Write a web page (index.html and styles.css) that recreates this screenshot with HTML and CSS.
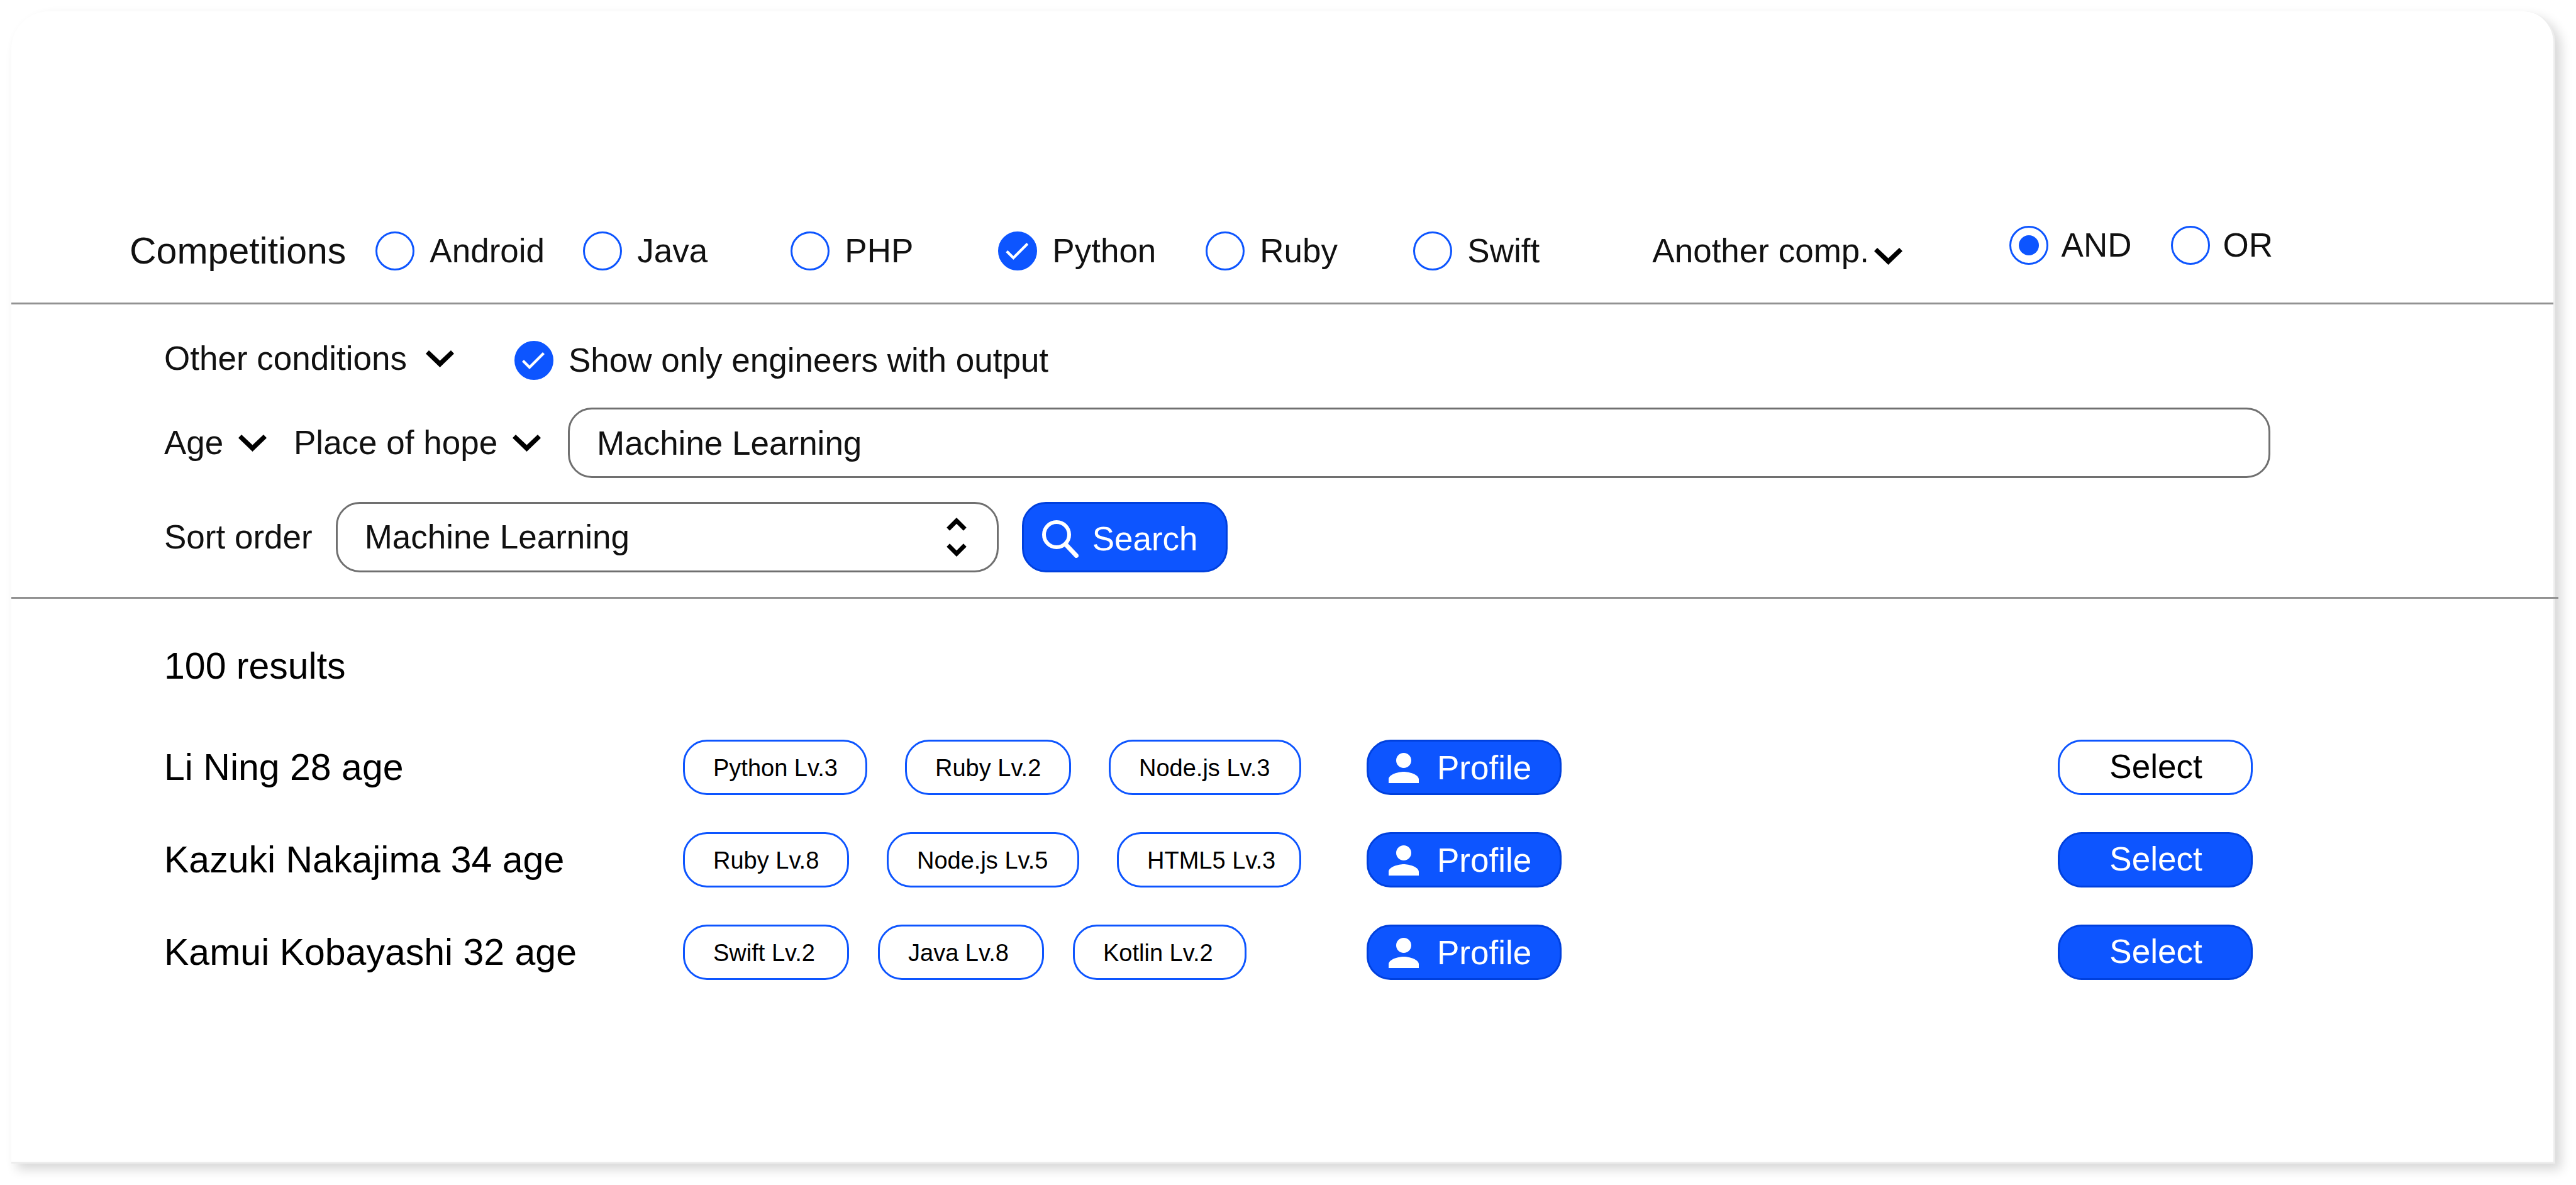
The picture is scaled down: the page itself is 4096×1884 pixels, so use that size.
FILE: index.html
```html
<!DOCTYPE html>
<html lang="en">
<head>
<meta charset="utf-8">
<title>Engineer search</title>
<link rel="stylesheet" href="styles.css">
</head>
<body>
<svg class="sprite" aria-hidden="true">
  <symbol id="chevron" viewBox="0 0 45 27"><path d="M5 0L22.5 16.5L40 0L45 5.2L22.5 27L0 5.2z"/></symbol>
  <symbol id="unfold" viewBox="7.41 3 9.18 18"><path d="M12 5.83L15.17 9l1.41-1.41L12 3 7.41 7.59 8.83 9 12 5.83zm0 12.34L8.83 15l-1.41 1.41L12 21l4.59-4.59L15.17 15 12 18.17z"/></symbol>
  <symbol id="person" viewBox="4 4 16 16"><path d="M12 12c2.21 0 4-1.79 4-4s-1.79-4-4-4-4 1.79-4 4 1.79 4 4 4zm0 2c-2.67 0-8 1.34-8 4v2h16v-2c0-2.66-5.33-4-8-4z"/></symbol>
  <symbol id="magnifier" viewBox="0 0 58 60"><circle cx="23" cy="23" r="20" fill="none" stroke="currentColor" stroke-width="6"/><path d="M38 39L54.5 56.5" fill="none" stroke="currentColor" stroke-width="7" stroke-linecap="round"/></symbol>
</svg>
<main class="card">
  <form>
    <section class="competitions">
      <h2 class="title">Competitions</h2>
      <div class="skills">
        <label class="choice"><input class="mark check" type="checkbox">Android</label>
        <label class="choice"><input class="mark check" type="checkbox">Java</label>
        <label class="choice"><input class="mark check" type="checkbox">PHP</label>
        <label class="choice"><input class="mark check" type="checkbox" checked>Python</label>
        <label class="choice"><input class="mark check" type="checkbox">Ruby</label>
        <label class="choice"><input class="mark check" type="checkbox">Swift</label>
      </div>
      <div class="picker picker-tight">
        <select class="picker-select" aria-label="Another competition"><option>Another comp.</option></select>
        <svg class="chevron" aria-hidden="true"><use href="#chevron"/></svg>
      </div>
      <div class="modes">
        <label class="choice choice-tight"><input class="mark radio" type="radio" name="mode" checked>AND</label>
        <label class="choice choice-tight"><input class="mark radio" type="radio" name="mode">OR</label>
      </div>
    </section>
    <hr class="rule">
    <section class="conditions">
      <div class="row row-top">
        <div class="picker picker-wide">
          <select class="picker-select" aria-label="Other conditions"><option>Other conditions</option></select>
          <svg class="chevron" aria-hidden="true"><use href="#chevron"/></svg>
        </div>
        <label class="choice"><input class="mark check" type="checkbox" checked>Show only engineers with output</label>
      </div>
      <div class="row">
        <div class="picker">
          <select class="picker-select" aria-label="Age"><option>Age</option></select>
          <svg class="chevron" aria-hidden="true"><use href="#chevron"/></svg>
        </div>
        <div class="picker">
          <select class="picker-select" aria-label="Place of hope"><option>Place of hope</option></select>
          <svg class="chevron" aria-hidden="true"><use href="#chevron"/></svg>
        </div>
        <input class="field keyword" type="text" aria-label="Keyword" value="Machine Learning">
      </div>
      <div class="row row-sort">
        <label for="sort">Sort order</label>
        <div class="sort">
          <select class="field sort-select" id="sort"><option>Machine Learning</option></select>
          <svg class="unfold" aria-hidden="true"><use href="#unfold"/></svg>
        </div>
        <button class="search" type="submit"><svg class="magnifier" aria-hidden="true"><use href="#magnifier"/></svg>Search</button>
      </div>
    </section>
  </form>
  <hr class="rule rule-long">
  <section class="results">
    <p class="count">100 results</p>
    <ul class="people">
      <li class="person">
        <span class="name">Li Ning 28 age</span>
        <div class="tags">
          <span class="tag tag-l">Python Lv.3</span><span class="tag">Ruby Lv.2</span><span class="tag tag-xl">Node.js Lv.3</span>
        </div>
        <button class="pill" type="button"><svg class="avatar" aria-hidden="true"><use href="#person"/></svg>Profile</button>
        <button class="pill pill-select pill-outline" type="button">Select</button>
      </li>
      <li class="person">
        <span class="name">Kazuki Nakajima 34 age</span>
        <div class="tags">
          <span class="tag">Ruby Lv.8</span><span class="tag tag-xl">Node.js Lv.5</span><span class="tag tag-l">HTML5 Lv.3</span>
        </div>
        <button class="pill" type="button"><svg class="avatar" aria-hidden="true"><use href="#person"/></svg>Profile</button>
        <button class="pill pill-select" type="button">Select</button>
      </li>
      <li class="person">
        <span class="name">Kamui Kobayashi 32 age</span>
        <div class="tags tags-close">
          <span class="tag">Swift Lv.2</span><span class="tag">Java Lv.8</span><span class="tag tag-m">Kotlin Lv.2</span>
        </div>
        <button class="pill" type="button"><svg class="avatar" aria-hidden="true"><use href="#person"/></svg>Profile</button>
        <button class="pill pill-select" type="button">Select</button>
      </li>
    </ul>
  </section>
</main>
</body>
</html>
```
FILE: styles.css
```css
* {
  box-sizing: border-box;
}

:root {
  --blue: #0d55ff;
  --blue-dark: #0040dd;
  --ink: #111;
}

body {
  margin: 0;
  padding: 18px 33px 33px 18px;
  background: #fff;
  color: var(--ink);
  font: 53px/62px "Liberation Sans", Arial, sans-serif;
  font-variant-ligatures: none;
}

button,
input,
select {
  margin: 0;
  color: inherit;
  font: inherit;
  font-variant-ligatures: none;
}

.sprite {
  position: absolute;
  width: 0;
  height: 0;
}

.card {
  padding-bottom: 289px;
  background: #fff;
  border-right: 3px solid #ededed;
  border-bottom: 3px solid #ededed;
  border-radius: 60px 50px 0 0;
  box-shadow: 9px 9px 18px rgba(0, 0, 0, 0.16);
}

.rule {
  height: 3px;
  margin: 0;
  border: 0;
  background: #929292;
}

.rule-long {
  margin-right: -8px;
}

/* Competitions bar */
.competitions {
  display: flex;
  align-items: flex-start;
  padding: 350px 446px 51px 188px;
}

.title {
  margin: 0 47px 0 0;
  font-size: 59px;
  font-weight: 400;
}

.skills {
  display: grid;
  grid-template-columns: repeat(6, 330px);
  margin-right: 50px;
}

.modes {
  display: flex;
  gap: 62px;
  margin: -9px 0 0 auto;
}

.choice {
  display: flex;
  align-items: center;
  gap: 24px;
}

.choice-tight {
  gap: 21px;
}

.mark {
  display: grid;
  place-items: center;
  flex: none;
  width: 62px;
  height: 62px;
  border: 3px solid var(--blue);
  border-radius: 50%;
  background: #fff;
  appearance: none;
}

.check:checked {
  background: var(--blue);
}

.check:checked::before {
  content: "";
  width: 36px;
  height: 28px;
  background: #fff;
  clip-path: polygon(0 15px, 3px 12px, 12px 21px, 33px 0, 36px 3px, 12px 27px);
  margin: 2px 2px 0 0;
}

.radio:checked::before {
  content: "";
  width: 32px;
  height: 32px;
  border-radius: 50%;
  background: var(--blue);
}

.picker {
  display: flex;
  align-items: center;
  gap: 23px;
}

.picker-tight {
  gap: 8px;
}

.picker-tight .chevron {
  margin-top: 16px;
}

.picker-wide {
  gap: 30px;
}

.picker-select {
  padding: 0;
  border: 0;
  background: none;
  appearance: none;
}

.chevron {
  flex: none;
  width: 45px;
  height: 27px;
}

/* Conditions */
.conditions {
  display: flex;
  flex-direction: column;
  gap: 38px;
  padding: 58px 450px 39px 243px;
}

.row {
  display: flex;
  align-items: center;
  gap: 43px;
}

.row-top {
  align-items: flex-start;
  gap: 96px;
  margin-bottom: 6px;
  line-height: 56px;
}

.row-sort {
  gap: 37px;
}

.field {
  height: 112px;
  padding: 0 43px;
  border: 3px solid #707070;
  border-radius: 38px;
  background: #fff;
  appearance: none;
}

.keyword {
  flex: 1;
  min-width: 0;
}

.sort {
  display: grid;
  align-items: center;
  width: 1054px;
}

.sort-select,
.unfold {
  grid-area: 1 / 1;
}

.unfold {
  justify-self: end;
  width: 32px;
  height: 62px;
  margin-right: 51px;
  pointer-events: none;
}

.search {
  display: flex;
  align-items: center;
  gap: 22px;
  width: 327px;
  height: 112px;
  padding: 5px 0 0 29px;
  border: 3px solid var(--blue-dark);
  border-radius: 38px;
  background: var(--blue);
  color: #fff;
}

.magnifier {
  width: 58px;
  height: 60px;
}

/* Results */
.results {
  padding: 73px 478px 0 243px;
  color: #000;
}

.count {
  margin: 0 0 83px;
  font-size: 59px;
  line-height: 68px;
}

.people {
  display: grid;
  gap: 59px;
  margin: 0;
  padding: 0;
  list-style: none;
}

.person {
  display: grid;
  grid-template-columns: 825px 1087px auto 1fr;
  align-items: center;
}

.name {
  font-size: 59px;
}

.tags {
  display: flex;
  gap: 60px;
}

.tags-close {
  gap: 46px;
}

.tag {
  width: 264px;
  height: 88px;
  padding-left: 45px;
  border: 3px solid var(--blue);
  border-radius: 38px;
  font-size: 38px;
  line-height: 84px;
  white-space: nowrap;
}

.tag-m {
  width: 276px;
}

.tag-l {
  width: 293px;
}

.tag-xl {
  width: 306px;
}

.pill {
  display: flex;
  align-items: center;
  gap: 29px;
  width: 310px;
  height: 88px;
  padding: 2px 0 0 32px;
  border: 3px solid var(--blue-dark);
  border-radius: 38px;
  background: var(--blue);
  color: #fff;
}

.pill-select {
  justify-content: center;
  justify-self: end;
  padding: 0 0 2px 2px;
}

.pill-outline {
  border-color: var(--blue);
  background: #fff;
  color: #000;
}

.avatar {
  width: 48px;
  height: 48px;
  fill: #fff;
}

.chevron,
.unfold {
  fill: #000;
}
```
